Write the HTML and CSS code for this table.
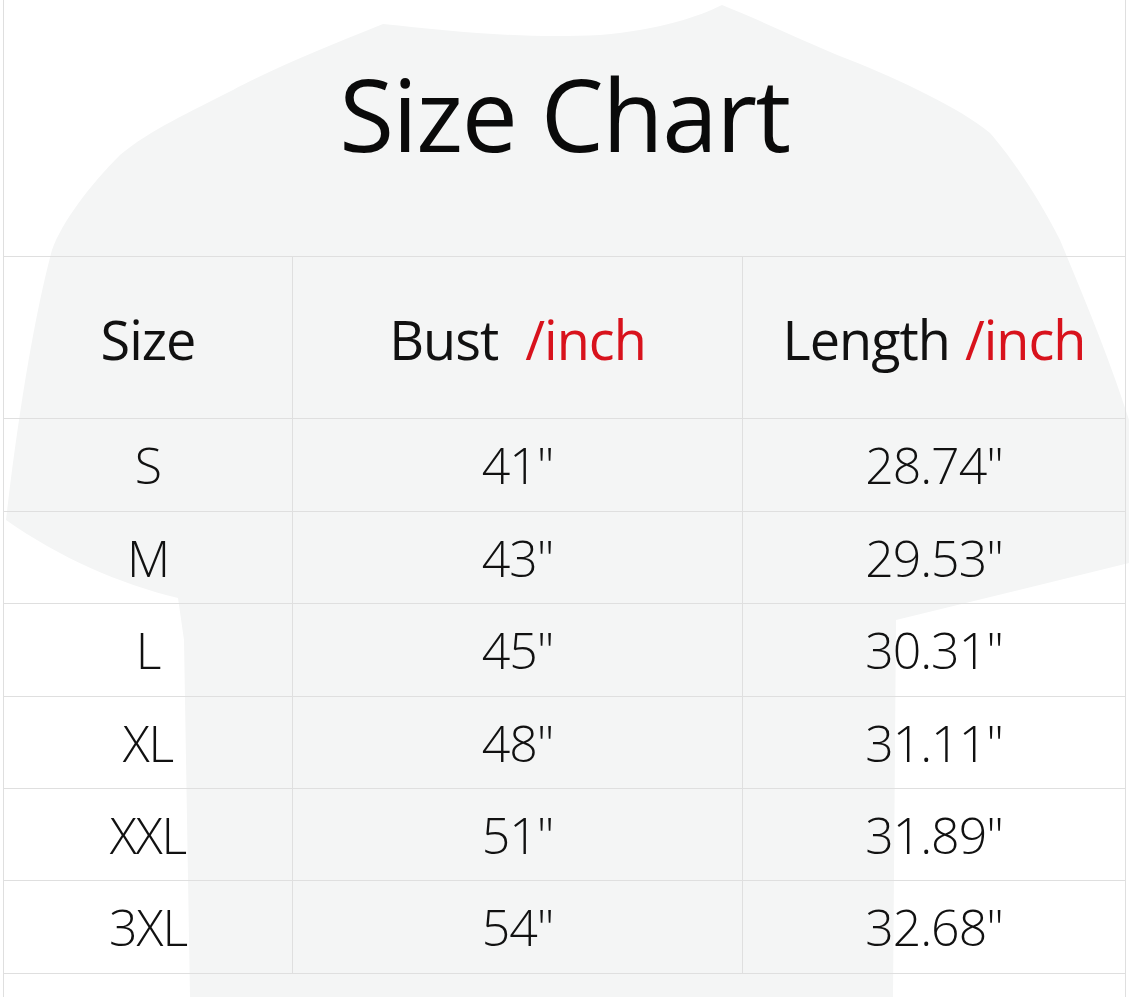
FILE: index.html
```html
<!DOCTYPE html>
<html lang="en">
<head>
<meta charset="utf-8">
<title>Size Chart</title>
<link rel="stylesheet" href="styles.css">
</head>
<body>
<div class="sheet">
  <svg class="shirt" viewBox="0 0 1129 997" width="1129" height="997" aria-hidden="true">
    <path d="M383,24 C330,45 270,70 233,90 C190,112 150,130 120,155 C90,185 62,222 52,250 C36,310 20,400 6,520 C60,558 120,584 178,598 L184,640 L190,997 L893,997 L896,620 L1129,563 L1129,420 C1110,360 1085,300 1060,240 C1040,200 1012,158 990,133 C960,108 900,80 850,60 C800,40 760,20 722,5 C700,16 660,30 600,35 C520,39 450,31 383,24 Z"/>
  </svg>
  <div class="frame">
    <h1 class="title">Size Chart</h1>
    <div class="chart">
      <div class="cell head">Size</div>
      <div class="cell head">Bust <span class="unit">/inch</span></div>
      <div class="cell head last">Length <span class="unit">/inch</span></div>

      <div class="cell r93">S</div>
      <div class="cell r93">41"</div>
      <div class="cell r93 last">28.74"</div>

      <div class="cell r92">M</div>
      <div class="cell r92">43"</div>
      <div class="cell r92 last">29.53"</div>

      <div class="cell r93">L</div>
      <div class="cell r93">45"</div>
      <div class="cell r93 last">30.31"</div>

      <div class="cell r92">XL</div>
      <div class="cell r92">48"</div>
      <div class="cell r92 last">31.11"</div>

      <div class="cell r92">XXL</div>
      <div class="cell r92">51"</div>
      <div class="cell r92 last">31.89"</div>

      <div class="cell r93">3XL</div>
      <div class="cell r93">54"</div>
      <div class="cell r93 last">32.68"</div>
    </div>
  </div>
</div>
</body>
</html>
```

FILE: styles.css
```css
* { box-sizing: border-box; }

html, body {
  margin: 0;
  padding: 0;
  background: #ffffff;
}

body {
  font-family: "Open Sans", "Noto Sans", "Liberation Sans", sans-serif;
  color: #0e0e0e;
}

.sheet {
  position: relative;
  width: 1129px;
  height: 997px;
  overflow: hidden;
  background: #ffffff;
}

.shirt {
  position: absolute;
  left: 0;
  top: 0;
  z-index: 0;
}

.shirt path {
  fill: #f4f5f5;
}

.frame {
  position: relative;
  z-index: 1;
  margin-left: 3px;
  width: 1123px;
  height: 997px;
  border-left: 1px solid #dfdfdf;
  border-right: 1px solid #dfdfdf;
}

.title {
  margin: 0;
  height: 256px;
  padding-top: 45px;
  text-align: center;
  font-weight: 400;
  font-size: 100px;
  line-height: 136px;
  letter-spacing: -1.5px;
  color: #0a0a0a;
}

.chart {
  display: grid;
  grid-template-columns: 289px 450px 382px;
  border-top: 1px solid #dfdfdf;
}

.cell {
  display: flex;
  align-items: center;
  justify-content: center;
  border-right: 1px solid #dfdfdf;
  border-bottom: 1px solid #dfdfdf;
  font-weight: 300;
  font-size: 50px;
  letter-spacing: -1px;
  color: #111111;
  white-space: pre;
}

.cell.last {
  border-right: none;
}

.head {
  height: 162px;
  font-weight: 400;
  font-size: 54px;
  letter-spacing: -1px;
  padding-top: 2px;
}

.unit {
  color: #d8121c;
  margin-left: 14px;
}

.head.last .unit {
  margin-left: 2px;
}

.r93 { height: 93px; }
.r92 { height: 92px; }
```
